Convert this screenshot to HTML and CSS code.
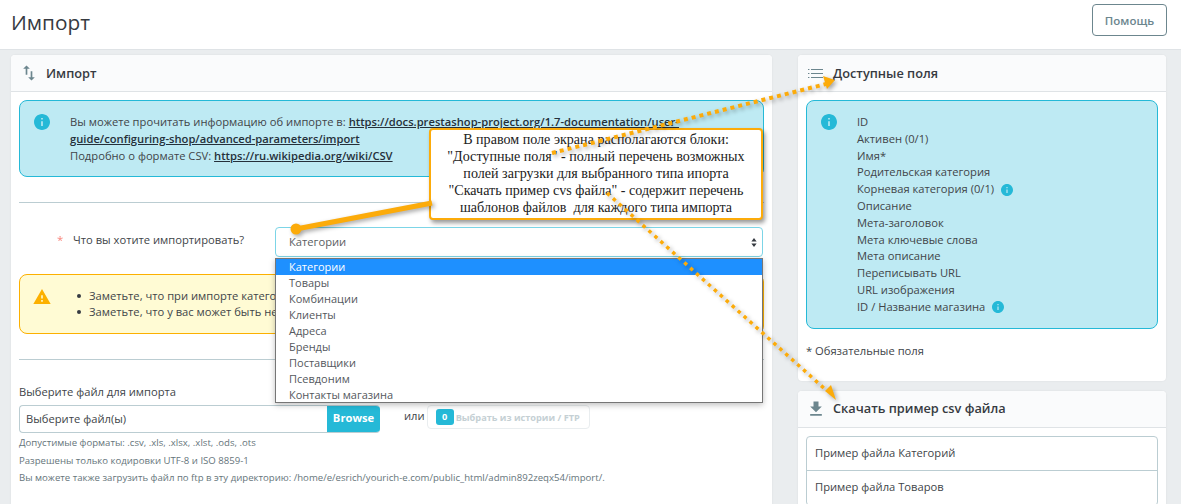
FILE: index.html
```html
<!DOCTYPE html>
<html lang="ru">
<head>
<meta charset="utf-8">
<title>Импорт</title>
<link rel="stylesheet" href="styles.css">
</head>
<body>
<header class="page-head">
  <h1 class="page-title">Импорт</h1>
  <button class="help-btn">Помощь</button>
</header>
<main class="layout">
  <section class="card card-main">
    <div class="card-head">
      <svg class="head-icon" viewBox="0 0 24 24"><path d="M9 3L5 6.99h3V14h2V6.99h3L9 3zm7 14.01V10h-2v7.01h-3L15 21l4-3.99h-3z"/></svg>
      <span class="head-title">Импорт</span>
    </div>
    <div class="card-body">
      <div class="alert alert-info alert-docs">
        <svg class="alert-icon info-fill" viewBox="2 2 20 20"><path d="M12 2C6.48 2 2 6.48 2 12s4.48 10 10 10 10-4.48 10-10S17.52 2 12 2zm1 15h-2v-6h2v6zm0-8h-2V7h2v2z"/></svg>
        <p class="alert-text">Вы можете прочитать информацию об импорте в: <a href="#">https://docs.prestashop-project.org/1.7-documentation/user-guide/configuring-shop/advanced-parameters/import</a><br>Подробно о формате CSV: <a href="#">https://ru.wikipedia.org/wiki/CSV</a></p>
      </div>
      <hr class="rule rule-first">
      <div class="form-row">
        <label class="form-label"><span class="req">*</span>Что вы хотите импортировать?</label>
        <div class="select-wrap">
          <div class="select-box">
            <span>Категории</span>
            <svg class="select-caret" viewBox="0 0 8 12"><path d="M4 0L7.5 4.6H.5zM4 12L.5 7.4h7z"/></svg>
          </div>
          <ul class="select-list">
            <li class="selected">Категории</li>
            <li>Товары</li>
            <li>Комбинации</li>
            <li>Клиенты</li>
            <li>Адреса</li>
            <li>Бренды</li>
            <li>Поставщики</li>
            <li>Псевдоним</li>
            <li>Контакты магазина</li>
          </ul>
        </div>
      </div>
      <div class="alert alert-warn">
        <svg class="warn-icon" viewBox="1 2 22 19"><path d="M1 21h22L12 2 1 21zm12-3h-2v-2h2v2zm0-4h-2v-4h2v4z"/></svg>
        <ul class="warn-list">
          <li>Заметьте, что при импорте категорий нельзя иметь две категории с одинаковым именем.</li>
          <li>Заметьте, что у вас может быть несколько товаров с одинаковым артикулом.</li>
        </ul>
      </div>
      <hr class="rule rule-second">
      <label class="file-label">Выберите файл для импорта</label>
      <div class="file-row">
        <div class="file-input">
          <span class="file-name">Выберите файл(ы)</span>
          <span class="browse">Browse</span>
        </div>
        <span class="or">или</span>
        <button class="history-btn"><span class="badge">0</span>Выбрать из истории / FTP</button>
      </div>
      <p class="hint hint-first">Допустимые форматы: .csv, .xls, .xlsx, .xlst, .ods, .ots</p>
      <p class="hint">Разрешены только кодировки UTF-8 и ISO 8859-1</p>
      <p class="hint">Вы можете также загрузить файл по ftp в эту директорию: /home/e/esrich/yourich-e.com/public_html/admin892zeqx54/import/.</p>
    </div>
  </section>
  <aside class="side">
    <section class="card">
      <div class="card-head">
        <svg class="list-icon" viewBox="0 0 15 9"><path d="M0 0h1.4v1H0zM3 0h12v1H3zM0 4h1.4v1H0zM3 4h12v1H3zM0 8h1.4v1H0zM3 8h12v1H3z"/></svg>
        <span class="head-title">Доступные поля</span>
      </div>
      <div class="card-body">
        <div class="alert alert-info alert-fields">
          <svg class="alert-icon info-fill" viewBox="2 2 20 20"><path d="M12 2C6.48 2 2 6.48 2 12s4.48 10 10 10 10-4.48 10-10S17.52 2 12 2zm1 15h-2v-6h2v6zm0-8h-2V7h2v2z"/></svg>
          <ul class="field-list">
            <li>ID</li>
            <li>Активен (0/1)</li>
            <li>Имя*</li>
            <li>Родительская категория</li>
            <li>Корневая категория (0/1)<svg class="mini-info info-fill" viewBox="2 2 20 20"><path d="M12 2C6.48 2 2 6.48 2 12s4.48 10 10 10 10-4.48 10-10S17.52 2 12 2zm1 15h-2v-6h2v6zm0-8h-2V7h2v2z"/></svg></li>
            <li>Описание</li>
            <li>Мета-заголовок</li>
            <li>Мета ключевые слова</li>
            <li>Мета описание</li>
            <li>Переписывать URL</li>
            <li>URL изображения</li>
            <li>ID / Название магазина<svg class="mini-info info-fill" viewBox="2 2 20 20"><path d="M12 2C6.48 2 2 6.48 2 12s4.48 10 10 10 10-4.48 10-10S17.52 2 12 2zm1 15h-2v-6h2v6zm0-8h-2V7h2v2z"/></svg></li>
          </ul>
        </div>
        <p class="required-note">* Обязательные поля</p>
      </div>
    </section>
    <section class="card">
      <div class="card-head">
        <svg class="head-icon" viewBox="0 0 24 24"><path d="M19 9h-4V3H9v6H5l7 7 7-7zM5 18v2h14v-2H5z"/></svg>
        <span class="head-title">Скачать пример csv файла</span>
      </div>
      <div class="card-body">
        <ul class="sample-list">
          <li>Пример файла Категорий</li>
          <li>Пример файла Товаров</li>
        </ul>
      </div>
    </section>
  </aside>
</main>
<svg class="arrows" viewBox="0 0 1181 504" width="1181" height="504">
  <g class="arrow-shadow">
    <path class="solid-line" d="M296 229L432 203"/>
    <circle class="arrow-fill" cx="296" cy="229" r="5.5"/>
    <path class="dot-line" d="M552 153L826 84"/>
    <path class="arrow-fill" d="M835 80L823 76L827 89z"/>
    <path class="dot-line dot-line-fine" d="M607 193L826 390"/>
    <path class="arrow-fill" d="M836 400L825 391L831 385z"/>
  </g>
</svg>
<div class="callout">В правом поле экрана располагаются блоки:<br>"Доступные поля" - полный перечень возможных<br>полей загрузки для выбранного типа ипорта<br>"Скачать пример cvs файла" - содержит перечень<br>шаблонов файлов&nbsp; для каждого типа импорта</div>
</body>
</html>
```
FILE: styles.css
```css
* { box-sizing: border-box; }
html, body { margin: 0; height: 504px; overflow: hidden; }
body {
  position: relative;
  background: #eaedef;
  color: #414549;
  font: 11.2px/16.8px "Open Sans", sans-serif;
}
ul { list-style: none; margin: 0; padding: 0; }
p { margin: 0; }
a { color: #25303a; }
button { font-family: inherit; }

.page-head {
  height: 50px;
  background: #fff;
  border-bottom: 1px solid #dfe3e6;
  display: flex;
  align-items: flex-start;
  justify-content: space-between;
  padding: 4px 14px 0 11px;
}
.page-title { margin: 0; font-size: 20.8px; line-height: 36px; font-weight: 400; color: #363a41; }
.help-btn {
  width: 75px;
  height: 32px;
  background: #fff;
  border: 1px solid #6c868e;
  border-radius: 4px;
  color: #6c868e;
  font-size: 11.5px;
  font-weight: 600;
  padding: 0;
}

.layout {
  display: grid;
  grid-template-columns: 761px 368px;
  column-gap: 26px;
  padding: 5px 0 0 11px;
  align-items: start;
}
.side { display: flex; flex-direction: column; gap: 10px; }
.card { background: #fff; border-radius: 4px; box-shadow: 0 0 2px rgba(0,0,0,.08); }
.card-main { min-height: 470px; }
.card-head {
  height: 37px;
  background: #fafbfc;
  border-bottom: 1px solid #dfe3e6;
  border-radius: 4px 4px 0 0;
  display: flex;
  align-items: center;
  padding: 0 8px;
  gap: 7px;
}
.head-title { font-size: 12.75px; font-weight: 600; color: #363a41; }
.head-icon { width: 20px; height: 20px; fill: #6c868e; flex: none; }
.list-icon { width: 15px; height: 9px; fill: #6c868e; flex: none; margin: 0 3px 0 2px; }
.card-body { padding: 8px; }

.alert { position: relative; border-radius: 8px; border: 1px solid; }
.alert-info { background: #beeaf3; border-color: #25b9d7; }
.alert-docs { padding: 13px 70px 0 50px; height: 77px; }
.alert-fields { padding: 13px 8px 0 50px; height: 229px; }
.alert-icon { position: absolute; left: 14px; top: 13px; width: 16px; height: 16px; }
.info-fill { fill: #25b9d7; }
.alert-text a { font-weight: 600; }

.rule { border: 0; border-top: 1px solid #bbcdd2; margin: 0; }
.rule-first { margin: 25px 0 24px; }
.rule-second { margin: 25px 0 24px; }

.form-row { display: flex; height: 30px; }
.form-label { width: 256px; padding: 5px 0 0 38px; }
.req { color: #f54c3e; display: inline-block; width: 16px; opacity: .7; }
.select-wrap { position: relative; width: 488px; }
.select-box {
  height: 30px;
  border: 1px solid #7cd5e7;
  border-radius: 4px;
  background: #fff;
  display: flex;
  align-items: center;
  justify-content: space-between;
  padding: 0 5px 0 13px;
  color: #5a5e62;
}
.select-caret { width: 6px; height: 9px; fill: #363a41; }
.select-list {
  position: absolute;
  z-index: 2;
  top: 31px;
  left: 0;
  width: 100%;
  height: 145px;
  background: #fff;
  border: 1px solid #767676;
  box-shadow: 0 2px 6px rgba(0,0,0,.25);
  color: #54585d;
  font-size: 11px;
}
.select-list li { height: 16px; line-height: 16px; padding-left: 13px; }
.select-list .selected { background: #1e90ff; color: #fff; }

.alert-warn {
  margin-top: 17px;
  height: 60px;
  background: #fffbd4;
  border-color: #fcb000;
  padding: 13px 0 0 57px;
}
.warn-icon { position: absolute; left: 13px; top: 14px; width: 18px; height: 15px; fill: #fcb000; }
.warn-list li { position: relative; padding-left: 12px; height: 16px; line-height: 16px; white-space: nowrap; overflow: hidden; }
.warn-list li::before {
  content: "";
  position: absolute;
  left: 0;
  top: 6px;
  width: 4px;
  height: 4px;
  border-radius: 50%;
  background: #363a41;
}

.file-label { display: block; height: 21px; color: #414549; }
.file-row { display: flex; align-items: flex-start; }
.file-input {
  width: 361px;
  height: 28px;
  border: 1px solid #bbcdd2;
  border-right: 0;
  border-radius: 4px;
  display: flex;
  justify-content: space-between;
  overflow: hidden;
}
.file-name { padding: 5px 0 0 6px; }
.browse {
  width: 53px;
  background: #25b9d7;
  color: #fff;
  font-weight: 700;
  text-align: center;
  line-height: 24px;
}
.or { margin: 3px 0 0 24px; }
.history-btn {
  margin-left: 2px;
  width: 163px;
  height: 24px;
  background: #fff;
  border: 1px solid #e9edef;
  border-radius: 4px;
  color: #c5d0d4;
  font-size: 9.2px;
  font-weight: 700;
  padding: 0 0 0 8px;
  display: flex;
  align-items: center;
  white-space: nowrap;
}
.badge {
  width: 18px;
  height: 16px;
  background: #25b9d7;
  border-radius: 3px;
  color: #fff;
  text-align: center;
  line-height: 16px;
  margin-right: 2px;
}
.hint { font-size: 9.6px; line-height: 17.5px; color: #66757b; white-space: nowrap; }
.hint-first { margin-top: 1px; }

.field-list li { height: 16.8px; white-space: nowrap; display: flex; align-items: center; }
.mini-info { width: 12px; height: 12px; margin-left: 7px; }
.required-note { margin-top: 14px; padding-bottom: 13px; }

.sample-list { border: 1px solid #bbcdd2; border-radius: 4px; }
.sample-list li { height: 34px; line-height: 32px; padding-left: 8px; border-bottom: 1px solid #bbcdd2; }
.sample-list li:last-child { border-bottom: 0; }

.arrows { position: absolute; left: 0; top: 0; z-index: 4; pointer-events: none; }
.arrow-shadow { filter: drop-shadow(2px 2px 2px rgba(0,0,0,.35)); }
.solid-line { stroke: #fcab0a; stroke-width: 5; fill: none; }
.dot-line { stroke: #fcab0a; stroke-width: 4; stroke-dasharray: 4 4; fill: none; }
.dot-line-fine { stroke-width: 3.5; stroke-dasharray: 3.5 4.5; }
.arrow-fill { fill: #fcab0a; }
.callout {
  position: absolute;
  z-index: 3;
  left: 429px;
  top: 128px;
  width: 334px;
  height: 92px;
  padding: 1px 0 0;
  background: #fff;
  border: 2px solid #fcab0a;
  border-radius: 4px;
  box-shadow: 2px 3px 4px rgba(0,0,0,.4);
  font: 14.1px/16.9px "Liberation Serif", serif;
  color: #222;
  text-align: center;
  white-space: nowrap;
}
```
